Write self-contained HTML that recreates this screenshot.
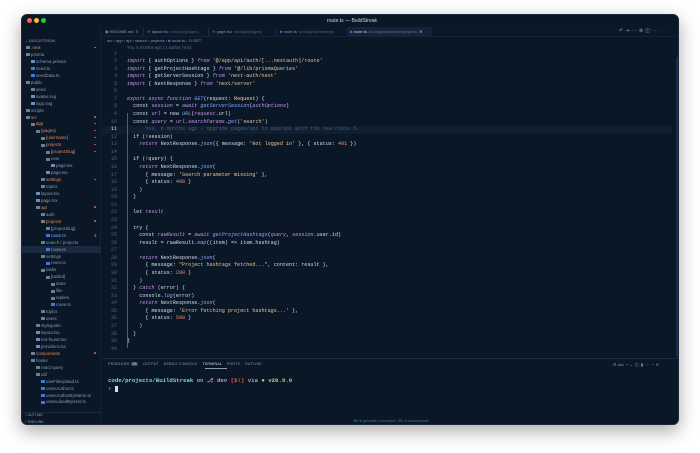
<!DOCTYPE html>
<html><head><meta charset="utf-8"><style>
*{margin:0;padding:0;box-sizing:border-box}
body{width:700px;height:453px;background:#fff;position:relative;overflow:hidden;font-family:"Liberation Sans",sans-serif}
.win{position:absolute;left:21px;top:14px;width:658px;height:411px;background:#0a1727;border-radius:6px;overflow:hidden;box-shadow:0 6px 18px rgba(0,0,0,.35);border:1px solid #1a2a3c}
.a{position:absolute;white-space:pre}
.sb{font-size:4.4px;color:#8a9bb0}
.code{font-family:"Liberation Mono",monospace;font-size:5.1px;color:#d6deeb}
.ln{position:absolute;width:12px;text-align:right;left:0;color:#4b6479}
.k{color:#c792ea;font-style:italic}.s{color:#ecc48d}.f{color:#82aaff;font-style:italic}.n{color:#f78c6c}.t{color:#ffcb8b}.v{color:#addb67}
.ic{display:inline-block;width:3.5px;height:3px;background:#6c7f95;margin-right:1.5px;vertical-align:middle;border-radius:.5px}
</style></head><body>
<div class="win">
<!-- title bar -->
<div class="a" style="left:0;top:0;width:658px;height:12px;background:#0a1727"></div>
<div class="a" style="left:5px;top:3px;width:5px;height:5px;border-radius:50%;background:#ff5f57"></div>
<div class="a" style="left:12px;top:3px;width:5px;height:5px;border-radius:50%;background:#febc2e"></div>
<div class="a" style="left:19px;top:3px;width:5px;height:5px;border-radius:50%;background:#28c840"></div>
<div class="a" style="left:305px;top:3px;font-size:5px;color:#c8d3df">route.ts — BuildStreak</div>
<!-- activity icons -->
<div class="a" style="left:14px;top:13px;font-size:6px;color:#7e8fa3;letter-spacing:5px">⚙⌕⑂⊞⌄</div>
<!-- tabs -->
<div class="a" style="left:79px;top:12px;width:579px;height:10px;background:#0b1829;border-bottom:1px solid #13223a"></div>
<div class="a" style="left:121px;top:13px;width:1px;height:8px;background:#1c2c40"></div>
<div class="a" style="left:186px;top:13px;width:1px;height:8px;background:#1c2c40"></div>
<div class="a" style="left:254px;top:13px;width:1px;height:8px;background:#1c2c40"></div>
<div class="a" style="left:325px;top:12px;width:85px;height:10px;background:#13233a"></div>
<div class="a sb" style="left:83px;top:14px;font-size:4px">◉ README.md  5</div>
<div class="a sb" style="left:125px;top:14px;font-size:4px">⚛ layout.tsx  <span style="color:#4e6278">src/app/(pages)</span></div>
<div class="a sb" style="left:190px;top:14px;font-size:4px">⚛ page.tsx  <span style="color:#4e6278">src/app/(pages)</span></div>
<div class="a sb" style="left:258px;top:14px;font-size:4px"><span style="color:#3c7ae0">■</span> route.ts  <span style="color:#4e6278">src/app/api/settings</span></div>
<div class="a sb" style="left:328px;top:14px;font-size:4px;color:#c8d3df"><span style="color:#3c7ae0">■</span> route.ts  <span style="color:#5e7288">src/app/api/search/projects</span>  ✕</div>
<div class="a" style="left:597px;top:13px;font-size:5px;color:#8a9bb0;letter-spacing:2px">↶⇥◦◦⊗◫⋯</div>
<div class="a sb" style="left:85px;top:23px;font-size:4px;color:#8a9bb0">src › app › api › search › projects › <span style="color:#3c7ae0">■</span> route.ts › ⊙ GET</div>
<!-- sidebar -->
<div class="a" style="left:0;top:12px;width:79px;height:399px;background:#0a1727;border-right:1px solid #13223a"></div>
<div class="a sb" style="left:3px;top:23px;font-size:3.8px">⌄ BUILDSTREAK</div>
<div id="tree"></div>
<div class="a" style="left:0;top:397px;width:79px;height:1px;background:#1a2a3c"></div>
<div class="a sb" style="left:3px;top:398px;font-size:3.6px">› OUTLINE</div>
<div class="a sb" style="left:3px;top:405px;font-size:3.6px">› TIMELINE</div>
<!-- editor -->
<div class="a" style="left:80px;top:111px;width:570px;height:7.6px;background:#0f1e31"></div>
<div class="a" style="left:654px;top:42px;width:3px;height:300px;background:#15304f"></div>
<div class="a" style="left:104.5px;top:98px;width:.7px;height:235px;background:#6e5d2c"></div>
<div class="a code" style="left:105px;top:30px;color:#5a6f85;font-size:4.2px;font-family:'Liberation Sans',sans-serif">You, 6 months ago | 1 author (You)</div>
<div id="code" class="a code" style="left:83px;top:35.5px;width:560px"></div>
<!-- panel -->
<div class="a" style="left:80px;top:343px;width:578px;height:1px;background:#1c2c40"></div>
<div class="a sb" style="left:86px;top:347px;font-size:3.6px;letter-spacing:.2px">PROBLEMS <span style="background:#3a4a5e;color:#c8d3df;border-radius:2px;padding:0 1.5px">38</span>    OUTPUT    DEBUG CONSOLE    <span style="color:#d6deeb">TERMINAL</span>    PORTS    OUTLINE</div>
<div class="a" style="left:183px;top:353px;width:22px;height:.7px;background:#8a9bb0"></div>
<div class="a sb" style="left:591px;top:347px;font-size:4px">⊡ zsh  + ⌄  ◫  ▮  ⋯  ^  ✕</div>
<div class="a" style="left:86px;top:362px;font-family:'Liberation Mono',monospace;font-size:5.7px;font-weight:bold;color:#7fdbca;white-space:pre">code/projects/BuildStreak <span style="color:#d6deeb;font-weight:normal">on</span> <span style="color:#c792ea">⎇ dev</span> <span style="color:#ef5350">[$!]</span> <span style="color:#d6deeb;font-weight:normal">via</span> <span style="color:#addb67">● v20.9.0</span></div>
<div class="a" style="left:86px;top:370px;font-family:'Liberation Mono',monospace;font-size:5.7px;font-weight:bold;color:#addb67">› <span style="display:inline-block;width:3.5px;height:6px;background:#d6deeb;vertical-align:middle"></span></div>
<div class="a" style="left:331px;top:404px;font-size:3.4px;color:#5a6f85">⌘K to generate a command • ⌘L to autocomplete</div>
</div>
<script>
const tree=[[".next",0,1,1],["prisma",0,1],["schema.prisma",1],["seed.ts",1,0,0,"b"],["seedData.ts",1,0,0,"b"],["public",0,1],["seed",1,1],["avatar.svg",1],["logo.svg",1],["scripts",0,1],["src",0,1,1],["app",1,1,1],["(pages)",2,1,1],["[username]",3,1,1],["projects",3,1,1],["[projectSlug]",4,1,1],["new",4,1],["page.tsx",5],["page.tsx",4],["settings",3,1,1],["topics",3,1],["layout.tsx",2],["page.tsx",2],["api",2,1,1],["auth",3,1],["projects",3,1,1],["[projectSlug]",4,1],["route.ts",4,0,2,"b"],["search / projects",3,1],["route.ts",4,0,0,"b",1],["settings",3,1],["route.ts",4,0,0,"b"],["tasks",3,1],["[taskId]",4,1],["done",5,1],["like",5,1],["replies",5,1],["route.ts",5,0,0,"b"],["topics",3,1],["users",3,1],["styleguide",2,1],["layout.tsx",2],["not-found.tsx",2],["providers.tsx",2],["components",1,1,1],["hooks",1,1],["react-query",2,1],["util",2,1],["useFileUpload.ts",3,0,0,"b"],["useIsAuthor.ts",3,0,0,"b"],["useIsAuthorByName.ts",3,0,0,"b"],["useIsLikedByUser.ts",3,0,0,"b"]];
let h="";tree.forEach((r,i)=>{const y=29+i*6.95;const x=4+r[1]*5;
if(r[5])h+=`<div class="a" style="left:0;top:${y}px;width:79px;height:7px;background:#1a2b41"></div>`;
const col=r[3]==1?"#e0885e":r[3]==2?"#82aaff":"#8a9bb0";
const icol=r[4]=="b"?"#3c7ae0":r[2]?"#6c7f95":"#6a8fc0";
h+=`<div class="a sb" style="left:${x}px;top:${y+1}px;color:${col}"><span class="ic" style="background:${icol}"></span>${r[0]}</div>`;
if(r[3]==1)h+=`<div class="a" style="left:72px;top:${y+2.5}px;width:1.5px;height:1.5px;border-radius:50%;background:#c0603e"></div>`;
if(r[3]==2)h+=`<div class="a sb" style="left:72px;top:${y+1}px;color:#e0885e">3</div>`;
});document.getElementById("tree").innerHTML=h;
const L=["",
`<span class="k">import</span> { authOptions } <span class="k">from</span> <span class="s">'@/app/api/auth/[...nextauth]/route'</span>`,
`<span class="k">import</span> { getProjectHashtags } <span class="k">from</span> <span class="s">'@/lib/prismaQueries'</span>`,
`<span class="k">import</span> { getServerSession } <span class="k">from</span> <span class="s">'next-auth/next'</span>`,
`<span class="k">import</span> { NextResponse } <span class="k">from</span> <span class="s">'next/server'</span>`,
"",
`<span class="k">export async function</span> <span class="f">GET</span>(request: <span class="t">Request</span>) {`,
`  const <span class="k">session</span> = <span class="k">await</span> <span class="f">getServerSession</span>(<span class="k">authOptions</span>)`,
`  const <span class="k">url</span> = new <span class="f">URL</span>(<span class="k">request</span>.url)`,
`  const <span class="k">query</span> = <span class="k">url</span>.<span class="k">searchParams</span>.<span class="f">get</span>(<span class="s">'search'</span>)`,
`<span style="color:#4b5e73">      You, 6 months ago • Upgrade pages/api to app/api with the new route h…</span>`,
`  if (!session)`,
`    <span class="k">return</span> NextResponse.<span class="f">json</span>({ message: <span class="s">'Not logged in'</span> }, { status: <span class="n">401</span> })`,
"",
`  if (!query) {`,
`    <span class="k">return</span> NextResponse.<span class="f">json</span>(`,
`      { message: <span class="s">'Search parameter missing'</span> },`,
`      { status: <span class="n">400</span> }`,
`    )`,`  }`,"",`  let <span class="k">result</span>`,"",`  try {`,
`    const <span class="k">rawResult</span> = <span class="k">await</span> <span class="f">getProjectHashtags</span>(<span class="k">query</span>, <span class="k">session</span>.user.id)`,
`    result = rawResult.<span class="f">map</span>((item) => item.hashtag)`,"",
`    <span class="k">return</span> NextResponse.<span class="f">json</span>(`,
`      { message: <span class="s">"Project hashtags fetched..."</span>, content: result },`,
`      { status: <span class="n">200</span> }`,`    )`,
`  } <span class="k">catch</span> (error) {`,
`    console.<span class="f">log</span>(error)`,
`    <span class="k">return</span> NextResponse.<span class="f">json</span>(`,
`      { message: <span class="s">'Error fetching project hashtags...'</span> },`,
`      { status: <span class="n">500</span> }`,`    )`,`  }`,`}`,""];
let c="";L.forEach((l,i)=>{const y=i*7.57;c+=`<div class="ln" style="top:${y}px;${i==10?'color:#d6deeb':''}">${i+1}</div><div class="a" style="left:22px;top:${y}px">${l}</div>`;});
document.getElementById("code").innerHTML=c;
</script>
</body></html>
